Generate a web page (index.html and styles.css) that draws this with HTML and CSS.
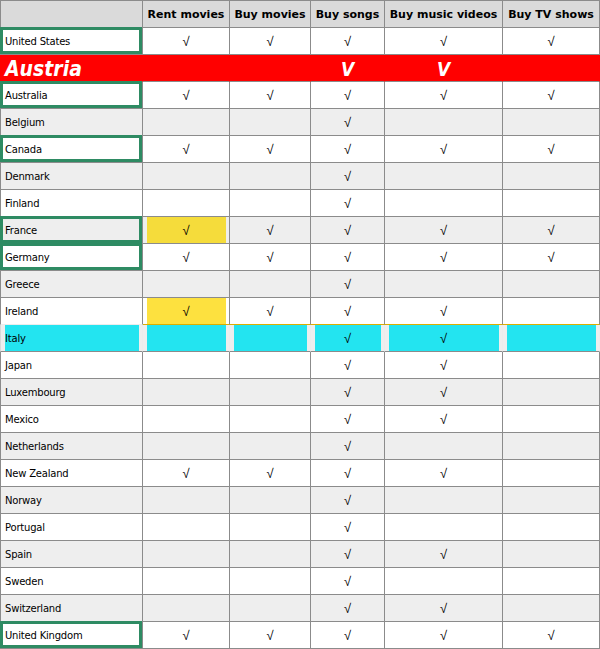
FILE: index.html
```html
<!DOCTYPE html>
<html>
<head>
<meta charset="utf-8">
<link rel="stylesheet" href="styles.css">
</head>
<body>
<table class="grid">
<colgroup>
<col class="c1"><col class="c2"><col class="c3"><col class="c4"><col class="c5"><col class="c6">
</colgroup>
<thead>
<tr><th></th><th>Rent movies</th><th>Buy movies</th><th>Buy songs</th><th>Buy music videos</th><th>Buy TV shows</th></tr>
</thead>
<tbody>
<tr><td class="name mark">United States</td><td>√</td><td>√</td><td>√</td><td>√</td><td>√</td></tr>
<tr class="red"><td class="name big">Austria</td><td></td><td></td><td class="vee">V</td><td class="vee">V</td><td></td></tr>
<tr><td class="name mark">Australia</td><td>√</td><td>√</td><td>√</td><td>√</td><td>√</td></tr>
<tr><td class="name">Belgium</td><td></td><td></td><td>√</td><td></td><td></td></tr>
<tr><td class="name mark">Canada</td><td>√</td><td>√</td><td>√</td><td>√</td><td>√</td></tr>
<tr><td class="name">Denmark</td><td></td><td></td><td>√</td><td></td><td></td></tr>
<tr><td class="name">Finland</td><td></td><td></td><td>√</td><td></td><td></td></tr>
<tr><td class="name mark">France</td><td class="hl yellow1">√</td><td>√</td><td>√</td><td>√</td><td>√</td></tr>
<tr><td class="name mark">Germany</td><td>√</td><td>√</td><td>√</td><td>√</td><td>√</td></tr>
<tr><td class="name">Greece</td><td></td><td></td><td>√</td><td></td><td></td></tr>
<tr class="before-cyan"><td class="name">Ireland</td><td class="hl yellow2">√</td><td>√</td><td>√</td><td>√</td><td></td></tr>
<tr class="cyan"><td class="name hl">Italy</td><td class="hl"></td><td class="hl"></td><td class="hl">√</td><td class="hl">√</td><td class="hl"></td></tr>
<tr><td class="name">Japan</td><td></td><td></td><td>√</td><td>√</td><td></td></tr>
<tr><td class="name">Luxembourg</td><td></td><td></td><td>√</td><td>√</td><td></td></tr>
<tr><td class="name">Mexico</td><td></td><td></td><td>√</td><td>√</td><td></td></tr>
<tr><td class="name">Netherlands</td><td></td><td></td><td>√</td><td></td><td></td></tr>
<tr><td class="name">New Zealand</td><td>√</td><td>√</td><td>√</td><td>√</td><td></td></tr>
<tr><td class="name">Norway</td><td></td><td></td><td>√</td><td></td><td></td></tr>
<tr><td class="name">Portugal</td><td></td><td></td><td>√</td><td></td><td></td></tr>
<tr><td class="name">Spain</td><td></td><td></td><td>√</td><td>√</td><td></td></tr>
<tr><td class="name">Sweden</td><td></td><td></td><td>√</td><td></td><td></td></tr>
<tr><td class="name">Switzerland</td><td></td><td></td><td>√</td><td>√</td><td></td></tr>
<tr><td class="name mark">United Kingdom</td><td>√</td><td>√</td><td>√</td><td>√</td><td>√</td></tr>
</tbody>
</table>
</body>
</html>
```
FILE: styles.css
```css
* { box-sizing: border-box; }
html, body { margin: 0; padding: 0; background: #fff; }

.grid {
  border-collapse: separate;
  border-spacing: 0;
  table-layout: fixed;
  width: 600px;
  font-family: "DejaVu Sans", sans-serif;
  color: #111;
}
.c1 { width: 143px; }
.c2 { width: 87px; }
.c3 { width: 81px; }
.c4 { width: 74px; }
.c5 { width: 118px; }
.c6 { width: 97px; }

.grid th, .grid td {
  border-right: 1px solid #8b8b8b;
  border-bottom: 1px solid #8b8b8b;
  padding: 0;
  text-align: center;
  vertical-align: middle;
  white-space: nowrap;
  overflow: visible;
}
.grid th:first-child, .grid td:first-child { border-left: 1px solid #8b8b8b; }

.grid thead tr { height: 28px; }
.grid th {
  border-top: 1px solid #8b8b8b;
  background: #dadada;
  font-size: 11px;
  font-weight: bold;
  color: #000;
  padding-top: 1px;
}

.grid tbody tr { height: 27px; --row: #ffffff; background: var(--row); }
.grid tbody tr:nth-child(even) { --row: #eeeeee; }

.grid td {
  font-family: "Liberation Sans", sans-serif;
  font-size: 13px;
  line-height: 14px;
  padding-top: 2px;
  color: #000;
}

.grid td.name {
  text-align: left;
  padding-left: 4px;
  font-family: "DejaVu Sans", sans-serif;
  font-size: 10px;
  letter-spacing: -0.2px;
  color: #000;
}

.mark { position: relative; }
.mark::after {
  content: "";
  position: absolute;
  left: -1px;
  right: 0;
  top: -1px;
  bottom: 0;
  border: 3px solid #2e8b63;
}

/* Austria row */
.grid tr.red td {
  background: #ff0000;
  border-right-color: #ff0000;
  color: #fff;
  padding-top: 1px;
}
.grid tr.red td:first-child { border-left-color: #ff0000; }
.grid td.big {
  font-family: "DejaVu Sans Condensed", "DejaVu Sans", sans-serif;
  font-weight: bold;
  font-style: italic;
  font-size: 21px;
  letter-spacing: 0;
  color: #fff;
  padding-left: 4px;
}
.grid td.vee {
  font-family: "DejaVu Sans Condensed", "DejaVu Sans", sans-serif;
  font-weight: bold;
  font-style: italic;
  font-size: 19px;
  color: #fff;
}

/* highlighted cells: colour fill inset from the cell edges */
.grid td.hl {
  box-shadow: inset 4px 0 0 var(--row), inset -3px 0 0 var(--row);
}
.grid td.yellow1 { background-color: #f5dc3b; }
.grid td.yellow2 { background-color: #fde13f; }

.grid tr.cyan td {
  background-color: #23e4f0;
  border-right-color: #ececec;
}
.grid tr.cyan td:first-child { border-left-color: #d8d8d8; }
.grid tr.before-cyan td { border-bottom-color: #dcae00; }
.grid tr.before-cyan td:first-child { border-bottom-color: #ececec; }
```
